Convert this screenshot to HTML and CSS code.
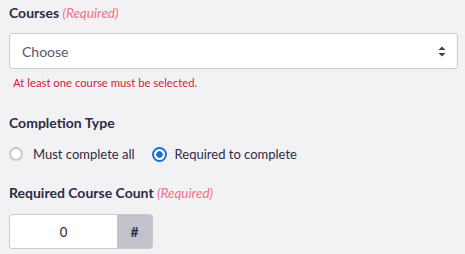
FILE: index.html
```html
<!DOCTYPE html>
<html lang="en">
<head>
  <meta charset="UTF-8">
  <title>Course Requirements</title>
  <link rel="stylesheet" href="styles.css">
</head>
<body>
  <form class="form">
    <div class="field">
      <label class="label">Courses <span class="req">(Required)</span></label>
      <div class="select">
        <span class="placeholder">Choose</span>
        <svg class="caret" width="8" height="11" viewBox="0 0 8 11">
          <path d="M4 0.5 L7.5 4 H0.5 Z" fill="#3a3f5c"/>
          <path d="M4 10.5 L7.5 7 H0.5 Z" fill="#3a3f5c"/>
        </svg>
      </div>
      <div class="error">At least one course must be selected.</div>
    </div>

    <div class="field field-type">
      <label class="label">Completion Type</label>
      <div class="radios">
        <label class="radio"><span class="dot"></span>Must complete all</label>
        <label class="radio"><span class="dot checked"></span>Required to complete</label>
      </div>
    </div>

    <div class="field field-count">
      <label class="label">Required Course Count <span class="req">(Required)</span></label>
      <div class="number">
        <span class="value">0</span>
        <span class="addon">#</span>
      </div>
    </div>
  </form>
</body>
</html>
```

FILE: styles.css
```css
body {
  margin: 0;
  padding: 3px 7px 0 9px;
  background-color: #f2f2f5;
  font-family: "Lato", "Open Sans", sans-serif;
  color: #2c2c45;
}
.label {
  display: block;
  font-size: 14px;
  font-weight: bold;
  line-height: 20px;
  color: #2c2c45;
}
.req {
  font-weight: normal;
  font-style: italic;
  font-size: 13.5px;
  color: #f27089;
}
.select {
  margin-top: 10px;
  height: 36px;
  box-sizing: border-box;
  border: 1px solid #c9c9d2;
  border-radius: 3px;
  background-color: #ffffff;
  display: flex;
  align-items: center;
  justify-content: space-between;
  padding: 0 11px 0 12px;
}
.placeholder {
  font-size: 14px;
  color: #55596b;
}
.caret {
  display: block;
}
.error {
  margin-top: 6px;
  margin-left: 4px;
  font-size: 11.3px;
  line-height: 16px;
  color: #d5183c;
}
.field-type {
  margin-top: 22px;
}
.radios {
  margin-top: 11px;
  display: flex;
  gap: 17px;
}
.radio {
  display: flex;
  align-items: center;
  font-size: 13px;
  line-height: 20px;
  color: #2c2c45;
}
.dot {
  width: 14px;
  height: 14px;
  box-sizing: border-box;
  border: 2px solid #c8c8d0;
  border-radius: 50%;
  background-color: #ffffff;
  margin-right: 10px;
}
.dot.checked {
  width: 15px;
  height: 15px;
  border: 2px solid #1c6fd6;
  background: radial-gradient(circle, #1c6fd6 0 3px, #ffffff 3.5px);
  margin-right: 8px;
}
.field-count {
  margin-top: 19px;
}
.number {
  margin-top: 11px;
  width: 144px;
  height: 35px;
  box-sizing: border-box;
  border: 1px solid #c9c9d2;
  border-radius: 3px;
  background-color: #ffffff;
  display: flex;
  overflow: hidden;
}
.value {
  flex: 1;
  display: flex;
  align-items: center;
  justify-content: center;
  font-size: 13px;
  color: #1c1c2e;
}
.addon {
  width: 35px;
  display: flex;
  align-items: center;
  justify-content: center;
  background-color: #c2c2cc;
  font-size: 14px;
  font-weight: bold;
  color: #2c2c45;
}
```
